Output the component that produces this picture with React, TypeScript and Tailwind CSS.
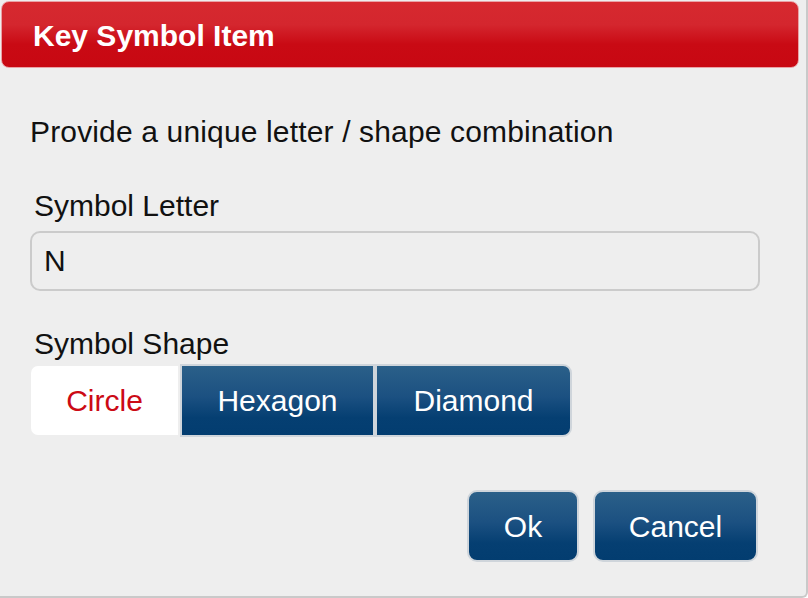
import * as React from "react";

const blueBtn =
  "border-2 border-[#cfd5db] bg-[linear-gradient(to_bottom,#2b6089_0%,#1b5081_45%,#053f72_75%,#033d70_100%)] text-white";

function ShapeOption({
  label,
  active,
  className,
}: {
  label: string;
  active?: boolean;
  className: string;
}) {
  if (active) {
    return (
      <div
        className={
          "flex items-center justify-center h-[73px] border-2 border-transparent bg-white bg-clip-padding text-[#cc0a15] " +
          className
        }
      >
        {label}
      </div>
    );
  }
  return (
    <div className={"flex items-center justify-center h-[73px] " + blueBtn + " " + className}>
      {label}
    </div>
  );
}

export default function App() {
  const [letter, setLetter] = React.useState("N");

  return (
    <div className="w-[808px] h-[598px] bg-[#eeeeee] border-r-2 border-b-2 border-[#c9c9c9] rounded-br-[6px] overflow-hidden font-['Liberation_Sans',Arial,sans-serif] text-[#111111]">
      <div className="mt-px ml-px w-[798px] h-[67px] rounded-[8px] border border-[#eaa2a6] bg-[linear-gradient(to_bottom,#d6292f_0%,#d4262e_35%,#c90a14_65%,#c80812_100%)] flex items-center pl-[31px] pt-[3px]">
        <h1 className="text-white font-bold text-[30px] leading-[36px]">Key Symbol Item</h1>
      </div>

      <div className="pl-[30px] pt-[46px] text-[30px] leading-[36px]">
        <p className="tracking-[0.15px]">Provide a unique letter / shape combination</p>

        <label className="block mt-[38px] pl-[4px]">Symbol Letter</label>
        <input
          value={letter}
          onChange={(e) => setLetter(e.target.value)}
          className="mt-[7px] w-[730px] h-[60px] rounded-[10px] border-2 border-[#cbcbcb] bg-[#eeeeee] px-[12px] text-[30px] outline-none"
        />

        <label className="block mt-[35px] pl-[4px]">Symbol Shape</label>
        <div className="mt-[2px] -ml-px flex">
          <ShapeOption label="Circle" active className="w-[151px] rounded-l-[9px]" />
          <ShapeOption label="Hexagon" className="w-[195px]" />
          <ShapeOption label="Diamond" className="w-[197px] rounded-r-[9px]" />
        </div>

        <div className="mt-[53px] w-[728px] flex justify-end gap-[14px]">
          <button className={"w-[112px] h-[72px] pt-[2px] rounded-[10px] " + blueBtn}>Ok</button>
          <button className={"w-[165px] h-[72px] pt-[2px] rounded-[10px] " + blueBtn}>Cancel</button>
        </div>
      </div>
    </div>
  );
}
